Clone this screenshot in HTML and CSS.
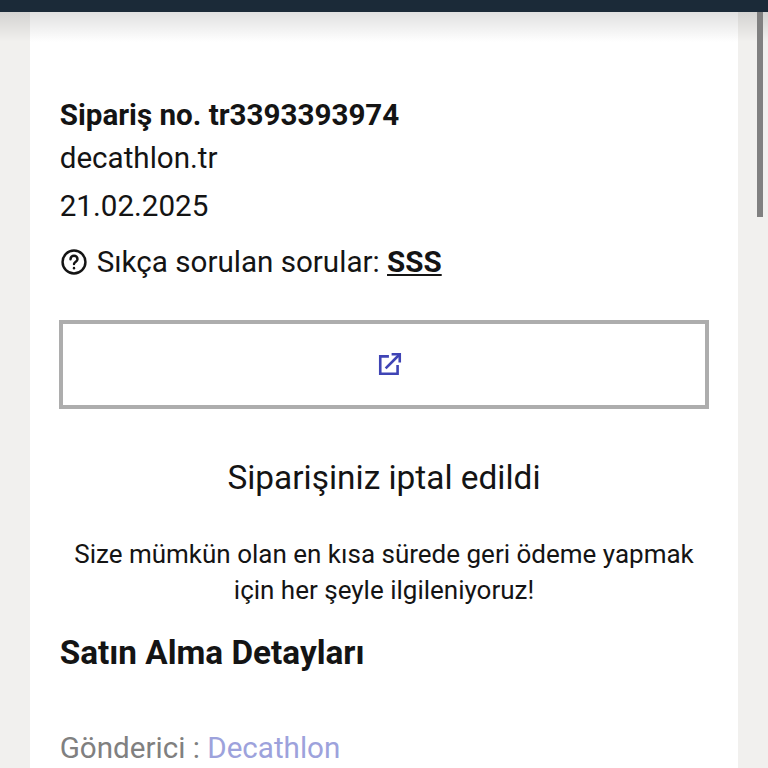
FILE: index.html
```html
<!DOCTYPE html>
<html lang="tr">
<head>
<meta charset="utf-8">
<title>Sipariş</title>
<link rel="stylesheet" href="styles.css">
</head>
<body>
<div class="topbar"></div>
<div class="shade"></div>
<div class="scrollthumb"></div>
<main class="card">
  <h1 class="order">Sipariş no. tr3393393974</h1>
  <p class="meta shop">decathlon.tr</p>
  <p class="meta date">21.02.2025</p>
  <p class="faq">
    <svg class="help" viewBox="0 0 24 24" width="28" height="28" fill="none" stroke="#141414" stroke-width="2.1" stroke-linecap="round"><circle cx="12" cy="12" r="9.8"/><path d="M9 9.6a3 3 0 0 1 6 0c0 2-3 2.2-3 4.2"/><path d="M12 17.2v.1"/></svg>
    <span>Sıkça sorulan sorular: <a class="faqlink" href="#">SSS</a></span>
  </p>
  <a class="track" href="#">
    <svg viewBox="0 0 24 24" width="26" height="26" fill="none" stroke="#3f44b5" stroke-width="2.4"><path d="M11 5H3v16h16v-8"/><path d="M8 16L21 3"/><path d="M13.5 3H21v7.5"/></svg>
  </a>
  <h2 class="status">Siparişiniz iptal edildi</h2>
  <p class="note">Size mümkün olan en kısa sürede geri ödeme yapmak<br>için her şeyle ilgileniyoruz!</p>
  <h2 class="section">Satın Alma Detayları</h2>
  <p class="sender">Gönderici : <span class="brand">Decathlon</span></p>
</main>
</body>
</html>
```
FILE: styles.css
```css
html, body {
  margin: 0;
  height: 768px;
  overflow: hidden;
  background: #f1f0ee;
  font-family: Roboto, "Liberation Sans", sans-serif;
  color: #141414;
}
.topbar {
  position: absolute;
  left: 0;
  top: 0;
  width: 100%;
  height: 12px;
  background: #1b2a38;
}
.shade {
  position: absolute;
  left: 0;
  top: 12px;
  width: 100%;
  height: 30px;
  background: linear-gradient(rgba(0,0,0,.12), rgba(0,0,0,0));
}
.scrollthumb {
  position: absolute;
  left: 757px;
  top: 12px;
  width: 6px;
  height: 205px;
  background: #808080;
}
.card {
  margin-left: 30px;
  width: 708px;
  height: 768px;
  box-sizing: border-box;
  padding: 98px 29.7px 0;
  background: #fff;
  overflow: hidden;
}
p, h1, h2 { margin: 0; }
.order {
  font-size: 29.6px;
  line-height: 34px;
  font-weight: 700;
}
.meta {
  font-size: 29.6px;
  line-height: 36px;
}
.shop { margin-top: 8px; }
.date { margin-top: 12px; }
.faq {
  display: flex;
  align-items: center;
  gap: 9px;
  margin-top: 20px;
  font-size: 29.6px;
  line-height: 36px;
}
.faqlink {
  color: #141414;
  font-weight: 700;
}
.track {
  display: flex;
  align-items: center;
  justify-content: center;
  box-sizing: border-box;
  height: 89px;
  margin: 40px -0.7px 0;
  padding: 0 0 2px 12px;
  border: 4px solid #adadad;
}
.status {
  margin-top: 48px;
  text-align: center;
  font-size: 33.4px;
  line-height: 42px;
  font-weight: 400;
}
.note {
  margin-top: 37px;
  text-align: center;
  font-size: 26px;
  line-height: 36px;
}
.section {
  margin-top: 25px;
  font-size: 33.3px;
  line-height: 40px;
  font-weight: 700;
}
.sender {
  margin-top: 57px;
  font-size: 29.6px;
  line-height: 36px;
  color: #808080;
}
.brand { color: #9da2dc; }
```
